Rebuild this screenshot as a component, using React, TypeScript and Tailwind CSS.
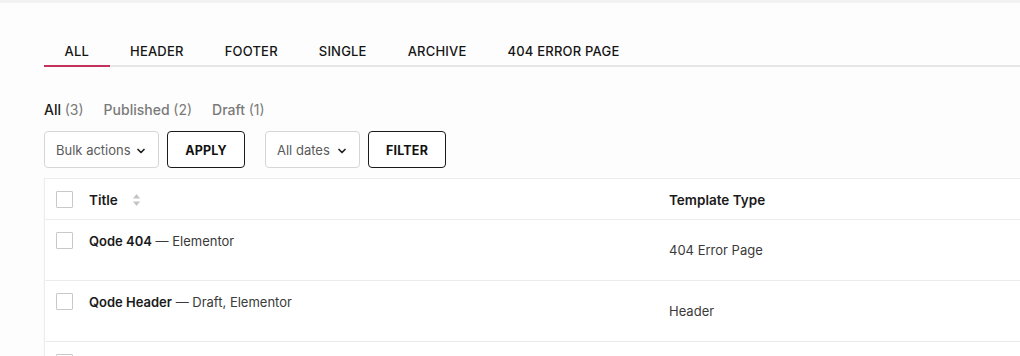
import { ChevronDown } from 'lucide-react';

const TABS = ['All', 'Header', 'Footer', 'Single', 'Archive', '404 Error Page'];

const ROWS = [
  { title: 'Qode 404', meta: 'Elementor', type: '404 Error Page' },
  { title: 'Qode Header', meta: 'Draft, Elementor', type: 'Header' },
];

function Checkbox() {
  return <span className="block w-[17px] h-[17px] border border-[#c9c9c9] bg-white rounded-[1px]" />;
}

function SortArrows() {
  return (
    <svg width="9" height="14" viewBox="0 0 9 14" className="text-[#c4c4c4]" fill="currentColor">
      <path d="M4.5 1 L8 5.5 H1 Z" />
      <path d="M4.5 13 L8 8.5 H1 Z" />
    </svg>
  );
}

function Select({ label, width }: { label: string; width: string }) {
  return (
    <div className={`flex items-center justify-between whitespace-nowrap h-[37px] pt-[2px] pl-[11px] pr-[11px] border border-[#d6d6d6] rounded-[4px] bg-white text-[13px] text-[#5a5a5a] ${width}`}>
      <span>{label}</span>
      <ChevronDown size={12} strokeWidth={3.5} className="text-[#222] shrink-0" />
    </div>
  );
}

function Button({ label, width }: { label: string; width: string }) {
  return (
    <button className={`h-[37px] pt-[4px] border border-[#1a1a1a] rounded-[4px] bg-white text-[12.5px] font-bold text-[#111] tracking-[0.2px] ${width}`}>
      {label}
    </button>
  );
}

export default function App() {
  return (
    <div className="w-[1020px] h-[356px] overflow-hidden bg-[#fdfdfd] border-t-[3px] border-[#f2f2f2] font-['Inter',sans-serif] text-[#1a1a1a]">
      <div className="ml-[44px] pt-[33px]">
        {/* Type tabs */}
        <div className="flex border-b-2 border-[#e6e6e6]">
          {TABS.map((tab, i) => (
            <div
              key={tab}
              className={
                'px-[20.5px] pt-[5px] pb-[4px] -mb-[2px] border-b-2 text-[13px] font-medium uppercase leading-[20px] tracking-[0.2px] text-[#151515] ' +
                (i === 0 ? 'border-[#c3335b]' : 'border-transparent')
              }
            >
              {tab}
            </div>
          ))}
        </div>

        {/* Status filters */}
        <div className="mt-[33px] flex gap-[20px] text-[14px] leading-[20px] font-medium">
          <span>
            All <span className="text-[#7a7a7a] font-normal">(3)</span>
          </span>
          <span className="text-[#7a7a7a]">
            Published <span className="font-normal">(2)</span>
          </span>
          <span className="text-[#7a7a7a]">
            Draft <span className="font-normal">(1)</span>
          </span>
        </div>

        {/* Bulk + date filter */}
        <div className="mt-[11px] flex items-center">
          <Select label="Bulk actions" width="w-[115px]" />
          <div className="ml-[8px]">
            <Button label="APPLY" width="w-[78px]" />
          </div>
          <div className="ml-[20px]">
            <Select label="All dates" width="w-[95px]" />
          </div>
          <div className="ml-[8px]">
            <Button label="FILTER" width="w-[78px]" />
          </div>
        </div>

        {/* Templates table */}
        <div className="mt-[10px] w-[1100px] bg-white border-l border-t border-[#ececec] shadow-[0_1px_2px_rgba(0,0,0,0.03)]">
          <div className="grid grid-cols-[44px_580px_1fr] items-center h-[41px] border-b border-[#ececec] text-[13.5px] font-semibold">
            <div className="pl-[11px]">
              <Checkbox />
            </div>
            <div className="flex items-center gap-[14px] pt-[2px]">
              <span>Title</span>
              <SortArrows />
            </div>
            <div className="pt-[2px]">Template Type</div>
          </div>
          {ROWS.map((row) => (
            <div key={row.title} className="grid grid-cols-[44px_580px_1fr] h-[61px] border-b border-[#ececec] text-[13px]">
              <div className="pl-[11px] pt-[12px]">
                <Checkbox />
              </div>
              <div className="pt-[11px] leading-[20px]">
                <span className="font-semibold">{row.title}</span>
                <span className="text-[#3a3a3a]"> — {row.meta}</span>
              </div>
              <div className="flex items-center text-[#3a3a3a] pt-[1px]">{row.type}</div>
            </div>
          ))}
          <div className="grid grid-cols-[44px_580px_1fr] h-[61px] text-[13px]">
            <div className="pl-[11px] pt-[12px]">
              <Checkbox />
            </div>
          </div>
        </div>
      </div>
    </div>
  );
}
